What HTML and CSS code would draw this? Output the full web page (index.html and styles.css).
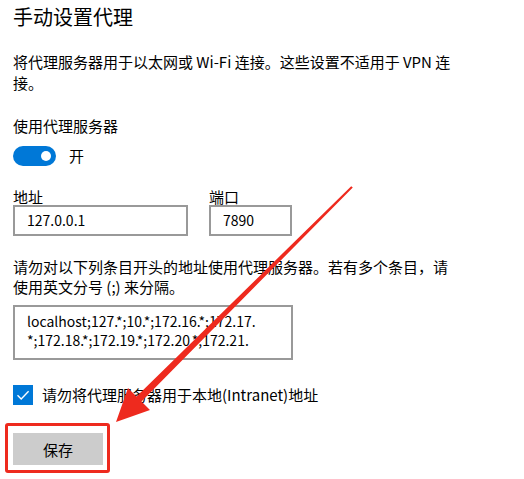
FILE: index.html
```html
<!DOCTYPE html>
<html lang="zh-CN">
<head>
<meta charset="utf-8">
<title>手动设置代理</title>
<link rel="stylesheet" href="styles.css">
</head>
<body>
<main class="page">
  <h1 class="title">手动设置代理</h1>
  <p class="desc">将代理服务器用于以太网或 Wi-Fi 连接。这些设置不适用于 VPN 连接。</p>

  <div class="label">使用代理服务器</div>
  <div class="toggle-row">
    <span class="toggle"><span class="knob"></span></span>
    <span class="toggle-text">开</span>
  </div>

  <div class="fields">
    <div class="field">
      <div class="field-label">地址</div>
      <div class="input addr">127.0.0.1</div>
    </div>
    <div class="field">
      <div class="field-label">端口</div>
      <div class="input port">7890</div>
    </div>
  </div>

  <p class="desc2">请勿对以下列条目开头的地址使用代理服务器。若有多个条目，请使用英文分号 (;) 来分隔。</p>

  <div class="textarea">
    <div class="ta-line">localhost;127.*;10.*;172.16.*;172.17.</div>
    <div class="ta-line">*;172.18.*;172.19.*;172.20.*;172.21.</div>
  </div>

  <div class="check-row">
    <span class="checkbox">
      <svg width="20" height="20" viewBox="0 0 20 20"><path d="M4.5 10.2 L8.2 13.9 L15.6 6.3" fill="none" stroke="#fff" stroke-width="1.4"/></svg>
    </span>
    <span class="check-text">请勿将代理服务器用于本地(Intranet)地址</span>
  </div>

  <div class="save-wrap">
    <button class="save">保存</button>
    <span class="highlight"></span>
  </div>
</main>

<svg class="arrow" width="524" height="479" viewBox="0 0 524 479">
  <polygon fill="#ee2a1e" points="352.8,187.5 351.2,186.2 136.5,396.5 128,388 116,422 150,410 141.5,401.5"/>
</svg>
</body>
</html>
```
FILE: styles.css
```css
html, body {
  margin: 0;
  padding: 0;
  background: #ffffff;
}

body {
  font-family: "Noto Sans CJK SC", "Noto Sans", sans-serif;
  color: #000000;
  position: relative;
  width: 524px;
  height: 479px;
  overflow: hidden;
}

.page {
  padding: 3px 13px 0 13px;
  display: flex;
  flex-direction: column;
  align-items: flex-start;
}

.title {
  margin: 0;
  font-size: 20px;
  line-height: 28px;
  font-weight: 400;
}

.desc {
  margin: 20px 0 0 0;
  width: 446px;
  font-size: 15px;
  line-height: 21px;
}

.label {
  margin-top: 23px;
  font-size: 15px;
  line-height: 20px;
}

.toggle-row {
  margin-top: 10px;
  display: flex;
  align-items: center;
  gap: 13px;
  height: 20px;
}

.toggle {
  width: 43px;
  height: 20px;
  border-radius: 10px;
  background: #0078d7;
  display: flex;
  align-items: center;
  justify-content: flex-end;
  padding-right: 5px;
  box-sizing: border-box;
}

.knob {
  width: 10px;
  height: 10px;
  border-radius: 50%;
  background: #ffffff;
}

.toggle-text {
  font-size: 15px;
  line-height: 20px;
}

.fields {
  margin-top: 22px;
  display: flex;
  gap: 21px;
}

.field-label {
  font-size: 15px;
  line-height: 17px;
}

.input {
  box-sizing: border-box;
  height: 31px;
  border: 2px solid #999999;
  padding: 0 12px;
  font-size: 14px;
  line-height: 27px;
}

.addr { width: 175px; }
.port { width: 83px; }

.desc2 {
  margin: 21px 0 0 0;
  width: 446px;
  font-size: 15px;
  line-height: 20px;
}

.textarea {
  margin-top: 8px;
  box-sizing: border-box;
  width: 280px;
  height: 55px;
  border: 2px solid #999999;
  padding: 5px 12px 0 12px;
  font-size: 14px;
  line-height: 19px;
  overflow: hidden;
}

.ta-line {
  white-space: nowrap;
}

.check-row {
  margin-top: 25px;
  display: flex;
  align-items: center;
  gap: 9px;
}

.checkbox {
  width: 20px;
  height: 20px;
  background: #0078d7;
  display: block;
}

.checkbox svg {
  display: block;
}

.check-text {
  font-size: 15px;
  line-height: 20px;
}

.save-wrap {
  margin-top: 28px;
  position: relative;
}

.save {
  display: block;
  width: 90px;
  height: 32px;
  border: none;
  background: #cccccc;
  font-family: inherit;
  font-size: 15px;
  color: #000000;
  padding: 0;
}

.highlight {
  position: absolute;
  left: -8px;
  top: -10px;
  width: 105px;
  height: 50px;
  box-sizing: border-box;
  border: 3px solid #ee2a1e;
  border-radius: 3px;
}

.arrow {
  position: absolute;
  left: 0;
  top: 0;
  pointer-events: none;
}
```
